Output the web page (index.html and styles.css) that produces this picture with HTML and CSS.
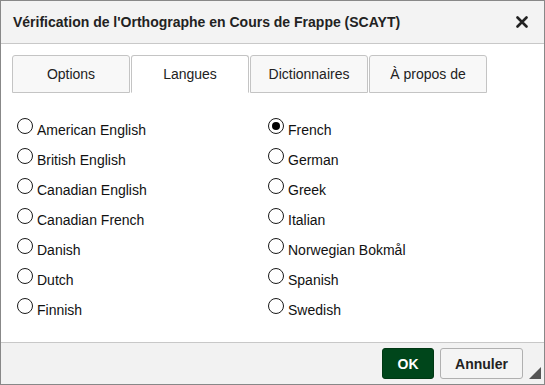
FILE: index.html
```html
<!DOCTYPE html>
<html lang="fr">
<head>
  <meta charset="UTF-8" />
  <title>SCAYT</title>
  <link rel="stylesheet" href="styles.css">
</head>
<body>
  <div class="dialog">
    <div class="dialog-header">
      <span class="dialog-title">Vérification de l'Orthographe en Cours de Frappe (SCAYT)</span>
      <span class="close">
        <svg width="12" height="12" viewBox="0 0 12 12"><path d="M1.5 1.5 L10.5 10.5 M10.5 1.5 L1.5 10.5" stroke="#222" stroke-width="2.6" stroke-linecap="round"/></svg>
      </span>
    </div>

    <div class="dialog-body">
      <div class="tabs">
        <div class="tab">Options</div>
        <div class="tab active">Langues</div>
        <div class="tab">Dictionnaires</div>
        <div class="tab">À propos de</div>
      </div>

      <div class="langs">
        <label class="lang"><input type="radio" name="lang" /> American English</label>
        <label class="lang"><input type="radio" name="lang" checked /> French</label>
        <label class="lang"><input type="radio" name="lang" /> British English</label>
        <label class="lang"><input type="radio" name="lang" /> German</label>
        <label class="lang"><input type="radio" name="lang" /> Canadian English</label>
        <label class="lang"><input type="radio" name="lang" /> Greek</label>
        <label class="lang"><input type="radio" name="lang" /> Canadian French</label>
        <label class="lang"><input type="radio" name="lang" /> Italian</label>
        <label class="lang"><input type="radio" name="lang" /> Danish</label>
        <label class="lang"><input type="radio" name="lang" /> Norwegian Bokmål</label>
        <label class="lang"><input type="radio" name="lang" /> Dutch</label>
        <label class="lang"><input type="radio" name="lang" /> Spanish</label>
        <label class="lang"><input type="radio" name="lang" /> Finnish</label>
        <label class="lang"><input type="radio" name="lang" /> Swedish</label>
      </div>
    </div>

    <div class="dialog-footer">
      <button class="btn btn-ok">OK</button>
      <button class="btn btn-cancel">Annuler</button>
      <span class="resize"></span>
    </div>
  </div>
</body>
</html>
```

FILE: styles.css
```css
* {
  box-sizing: border-box;
}
body {
  margin: 0;
  font-family: "Liberation Sans", Arial, sans-serif;
  color: #111;
}
.dialog {
  width: 545px;
  height: 385px;
  border: 1px solid #888;
  display: flex;
  flex-direction: column;
  background: #fff;
}
.dialog-header {
  height: 43px;
  background: #f3f3f3;
  border-bottom: 1px solid #c8c8c8;
  display: flex;
  align-items: center;
  justify-content: space-between;
  padding: 0 16px 0 12px;
}
.dialog-title {
  font-weight: bold;
  font-size: 14px;
  color: #222;
}
.close {
  display: flex;
}
.dialog-body {
  flex: 1;
  padding-top: 11px;
}
.tabs {
  display: flex;
  padding-left: 11px;
}
.tab {
  width: 118px;
  height: 38px;
  margin-right: 1px;
  border: 1px solid #c4c4c4;
  border-radius: 3px 3px 0 0;
  background: #f8f8f8;
  font-size: 14px;
  display: flex;
  align-items: center;
  justify-content: center;
  color: #222;
}
.tab.active {
  background: #fff;
  border-bottom-color: #fff;
}
.langs {
  display: grid;
  grid-template-columns: 251px 251px;
  grid-auto-rows: 30px;
  padding: 22px 0 0 16px;
}
.lang {
  display: flex;
  align-items: center;
  font-size: 14px;
  color: #111;
}
.lang input {
  appearance: none;
  -webkit-appearance: none;
  width: 16px;
  height: 16px;
  margin: 0 4px 0 0;
  border: 1.4px solid #1a1a1a;
  border-radius: 50%;
  background: #fff;
  position: relative;
  top: -4px;
}
.lang input:checked::after {
  content: "";
  position: absolute;
  left: 2.5px;
  top: 2.5px;
  width: 8px;
  height: 8px;
  border-radius: 50%;
  background: #000;
}
.dialog-footer {
  height: 42px;
  background: #f2f2f2;
  border-top: 1px solid #c8c8c8;
  display: flex;
  align-items: center;
  justify-content: flex-end;
  padding-right: 21px;
  gap: 6px;
  position: relative;
}
.btn {
  height: 31px;
  font-family: "Liberation Sans", Arial, sans-serif;
  font-weight: bold;
  font-size: 14px;
  border-radius: 3px;
  padding: 0;
}
.btn-ok {
  width: 52px;
  background: #00461b;
  border: 1px solid #003813;
  color: #fff;
}
.btn-cancel {
  width: 83px;
  background: #f4f4f4;
  border: 1px solid #b0b0b0;
  color: #222;
}
.resize {
  position: absolute;
  right: 3px;
  bottom: 5px;
  width: 0;
  height: 0;
  border-left: 12px solid transparent;
  border-bottom: 12px solid #555;
}
```
